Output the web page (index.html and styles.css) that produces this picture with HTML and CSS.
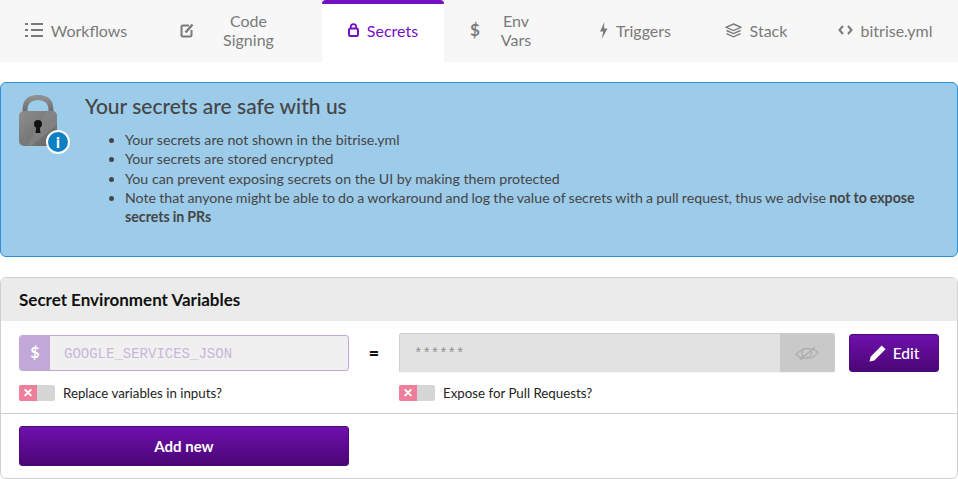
FILE: index.html
```html
<!DOCTYPE html>
<html lang="en">
<head>
    <meta charset="UTF-8">
    <title>Secrets</title>
    <link rel="stylesheet" href="styles.css">
</head>
<body>
    <nav class="tabs">
        <a class="tab">
            <svg class="tab-icon" width="18" height="14" viewBox="0 0 18 14"><path d="M0 1h3M6 1h12M0 7h3M6 7h12M0 13h3M6 13h12" stroke="currentColor" stroke-width="2" fill="none"/></svg>
            <span>Workflows</span>
        </a>
        <a class="tab">
            <svg class="tab-icon" width="14" height="15" viewBox="0 0 14 15"><path d="M9 2.500H3a1.500 1.500 0 0 0-1.500 1.500v8A1.500 1.500 0 0 0 3 13.500h7a1.500 1.500 0 0 0 1.500-1.500V7" stroke="currentColor" stroke-width="2" fill="none"/><path d="M5.500 9.500l7-8" stroke="currentColor" stroke-width="2.400" fill="none"/></svg>
            <span class="tab-wrap tab-wrap-code">Code<br>Signing</span>
        </a>
        <a class="tab active">
            <svg class="tab-icon" width="11" height="14" viewBox="0 0 11 14"><path d="M2.800 6V3.800a2.700 2.700 0 0 1 5.400 0V6" stroke="currentColor" stroke-width="1.800" fill="none"/><rect x="1" y="5.500" width="9" height="7.500" rx="1.500" stroke="currentColor" stroke-width="2" fill="none"/></svg>
            <span>Secrets</span>
        </a>
        <a class="tab">
            <span class="tab-dollar">$</span>
            <span class="tab-wrap tab-wrap-env">Env<br>Vars</span>
        </a>
        <a class="tab">
            <svg class="tab-icon" width="9" height="17" viewBox="0 0 9 17"><path d="M5.500 0L1 9.500h3.200L2.800 17 8.500 6.500H5z" fill="currentColor"/></svg>
            <span>Triggers</span>
        </a>
        <a class="tab">
            <svg class="tab-icon" width="17" height="15" viewBox="0 0 17 15"><path d="M8.500 1L16 4.300 8.500 7.600 1 4.300z" stroke="currentColor" stroke-width="1.400" fill="none"/><path d="M1.500 7.500l7 3.100 7-3.100M1.500 10.700l7 3.100 7-3.100" stroke="currentColor" stroke-width="1.400" fill="none"/></svg>
            <span>Stack</span>
        </a>
        <a class="tab">
            <svg class="tab-icon" width="15" height="10" viewBox="0 0 15 10"><path d="M5 1L1.500 5 5 9M10 1l3.500 4L10 9" stroke="currentColor" stroke-width="2" fill="none"/></svg>
            <span>bitrise.yml</span>
        </a>
    </nav>

    <main>
        <section class="notice">
            <div class="notice-icon">
                <svg width="38" height="52" viewBox="0 0 38 52">
                    <defs>
                        <linearGradient id="lockBody" x1="0" y1="0" x2="1" y2="1">
                            <stop offset="0" stop-color="#8e8e8e"/>
                            <stop offset="1" stop-color="#646464"/>
                        </linearGradient>
                        <linearGradient id="lockBar" x1="0" y1="0" x2="0" y2="1">
                            <stop offset="0" stop-color="#8f8f8f"/>
                            <stop offset="1" stop-color="#636363"/>
                        </linearGradient>
                    </defs>
                    <path d="M6 20V15C6 6 11 2.500 19 2.500S32 6 32 15v5" stroke="url(#lockBar)" stroke-width="5" fill="none"/>
                    <rect x="0" y="16" width="38" height="35" rx="5" fill="url(#lockBody)"/>
                    <path d="M28 16h5a5 5 0 0 1 5 5v9L12 51H8z" fill="#8a8a8a" opacity="0.55"/>
                    <circle cx="19" cy="29" r="4" fill="#111"/>
                    <path d="M17.500 31h3l1 7h-5z" fill="#111"/>
                </svg>
                <span class="info-badge">i</span>
            </div>
            <div class="notice-text">
                <h2>Your secrets are safe with us</h2>
                <ul>
                    <li>Your secrets are not shown in the bitrise.yml</li>
                    <li>Your secrets are stored encrypted</li>
                    <li>You can prevent exposing secrets on the UI by making them protected</li>
                    <li class="notice-note">Note that anyone might be able to do a workaround and log the value of secrets with a pull request, thus we advise <strong>not to expose secrets in PRs</strong></li>
                </ul>
            </div>
        </section>

        <section class="card">
            <h3 class="card-title">Secret Environment Variables</h3>
            <div class="secret-row">
                <div class="secret-key">
                    <div class="key-field">
                        <span class="key-prefix">$</span>
                        <span class="key-name">GOOGLE_SERVICES_JSON</span>
                    </div>
                    <label class="toggle-line">
                        <span class="toggle"><span class="toggle-x">&#10005;</span></span>
                        Replace variables in inputs?
                    </label>
                </div>
                <span class="equals">=</span>
                <div class="secret-value">
                    <div class="value-field">
                        <span class="value-text">******</span>
                        <span class="value-eye">
                            <svg width="24" height="15" viewBox="0 0 24 15"><path d="M1 8.500C5 4 9 2.500 13 2.500c4 0 7.500 1.500 10 4-3.500 4.500-7.500 6-11 6-4 0-8.500-1.500-11-4z" stroke="#acacac" stroke-width="1.200" fill="none"/><path d="M8.500 10.500a4 4 0 0 1 6-7M16 5a4 4 0 0 1-4.500 6" stroke="#acacac" stroke-width="1.200" fill="none"/><path d="M5 14L20 1" stroke="#acacac" stroke-width="1.300"/></svg>
                        </span>
                    </div>
                    <label class="toggle-line">
                        <span class="toggle"><span class="toggle-x">&#10005;</span></span>
                        Expose for Pull Requests?
                    </label>
                </div>
                <button class="btn btn-edit">
                    <svg width="17" height="17" viewBox="0 0 16 16"><path d="M12 0.500l3.500 3.500L5 14.500 0.500 15.500 1.500 11z" fill="#fff"/></svg>
                    Edit
                </button>
            </div>
            <div class="card-footer">
                <button class="btn btn-add">Add new</button>
            </div>
        </section>
    </main>
</body>
</html>
```

FILE: styles.css
```css
body {
    font-family: Lato, "Noto Sans", Arial, sans-serif;
    background-color: #fff;
    color: #454545;
    margin: 0;
    padding: 0;
    overflow: hidden;
}
.tabs {
    display: grid;
    grid-template-columns: 152px 170px 122px 126px 130px 112px 146px;
    height: 62px;
    background-color: #f7f7f7;
}
.tab {
    display: flex;
    align-items: center;
    justify-content: center;
    gap: 8px;
    padding-bottom: 2px;
    color: #7a7a7a;
    font-size: 16px;
    line-height: 19px;
    text-align: center;
}
.tab-icon {
    flex: none;
}
.tab-wrap-code {
    width: 93px;
    margin-right: -1px;
}
.tab-wrap-env {
    width: 56px;
}
.tab-dollar {
    font-weight: 700;
    font-size: 17px;
    width: 10px;
    padding-bottom: 2px;
}
.tab.active {
    background-color: #fff;
    color: #760fc3;
    border-top: 4px solid #760fc3;
    border-radius: 4px 4px 0 0;
    box-sizing: border-box;
    padding-bottom: 6px;
}
main {
    padding-top: 20px;
}
.notice {
    display: flex;
    height: 175px;
    box-sizing: border-box;
    background-color: #9dcbea;
    border: 1px solid #2a93d8;
    border-radius: 6px;
    padding: 12px 18px;
}
.notice-icon {
    position: relative;
    width: 38px;
    height: 52px;
    flex: none;
}
.info-badge {
    position: absolute;
    left: 27px;
    top: 35px;
    width: 20px;
    height: 20px;
    border: 2px solid #fff;
    border-radius: 50%;
    background-color: #0f7fc4;
    color: #fff;
    font-weight: 900;
    font-size: 15px;
    line-height: 20px;
    text-align: center;
}
.notice-text {
    margin-left: 28px;
}
.notice-text h2 {
    margin: 0;
    font-size: 21px;
    font-weight: 500;
    line-height: 22px;
    color: #454545;
}
.notice-text ul {
    margin: 13px 0 0;
    padding-left: 40px;
    font-size: 14.200px;
    line-height: 19.300px;
}
.notice-note {
    word-spacing: -0.5px;
}
.card {
    margin-top: 20px;
    height: 202px;
    box-sizing: border-box;
    border: 1px solid #d0d0d0;
    border-radius: 6px;
    overflow: hidden;
}
.card-title {
    margin: 0;
    height: 43px;
    padding-left: 18px;
    background-color: #ebebeb;
    color: #111;
    font-size: 17px;
    font-weight: 700;
    line-height: 43px;
}
.secret-row {
    display: flex;
    align-items: flex-start;
    padding: 12px 18px 0;
    height: 80px;
}
.secret-key {
    width: 330px;
    margin-top: 2px;
}
.key-field {
    display: flex;
    height: 36px;
    box-sizing: border-box;
    border: 1px solid #c1a8d6;
    border-radius: 3px;
    background-color: #f0f0f0;
    overflow: hidden;
}
.key-prefix {
    width: 30px;
    background-color: #c1a8d6;
    color: #fff;
    font-weight: 700;
    font-size: 16px;
    line-height: 32px;
    text-align: center;
}
.key-name {
    padding-left: 14px;
    font-family: "Liberation Mono", monospace;
    font-size: 14px;
    line-height: 37px;
    color: #c9b6da;
}
.equals {
    width: 50px;
    color: #111;
    font-weight: 900;
    font-size: 18px;
    line-height: 40px;
    text-align: center;
}
.secret-value {
    width: 436px;
}
.value-field {
    display: flex;
    height: 40px;
    box-sizing: border-box;
    border: 1px solid #cfcfcf;
    border-bottom-color: #f4f4f4;
    border-radius: 3px;
    background-color: #e2e2e2;
    overflow: hidden;
}
.value-text {
    flex: 1;
    padding-left: 14px;
    font-family: "Liberation Mono", monospace;
    font-size: 14px;
    line-height: 41px;
    color: #8f8f8f;
}
.value-eye {
    width: 54px;
    display: flex;
    align-items: center;
    justify-content: center;
    background-color: #c9c9c9;
}
.toggle-line {
    display: flex;
    align-items: center;
    gap: 8px;
    font-size: 13.300px;
    line-height: 16px;
    color: #222;
}
.secret-key .toggle-line {
    margin-top: 14px;
}
.secret-value .toggle-line {
    margin-top: 12px;
}
.toggle {
    display: block;
    width: 36px;
    height: 16px;
    border-radius: 2px;
    background-color: #d6d6d6;
    overflow: hidden;
}
.toggle-x {
    display: block;
    width: 18px;
    height: 16px;
    background-color: #ee7f9b;
    color: #fff;
    font-size: 12px;
    font-weight: 700;
    line-height: 16px;
    text-align: center;
}
.btn {
    border: 1px solid #4c0a7c;
    border-radius: 3px;
    background: linear-gradient(#6f10ac, #4b0676);
    color: #fff;
    font-family: inherit;
    font-size: 15px;
    font-weight: 700;
    cursor: pointer;
}
.btn-edit {
    display: flex;
    align-items: center;
    justify-content: center;
    gap: 7px;
    width: 90px;
    height: 38px;
    margin: 1px 0 0 14px;
    font-size: 15.500px;
    font-weight: 500;
}
.card-footer {
    border-top: 1px solid #d0d0d0;
    padding: 12px 18px 0;
}
.btn-add {
    display: block;
    width: 330px;
    height: 40px;
}
```
